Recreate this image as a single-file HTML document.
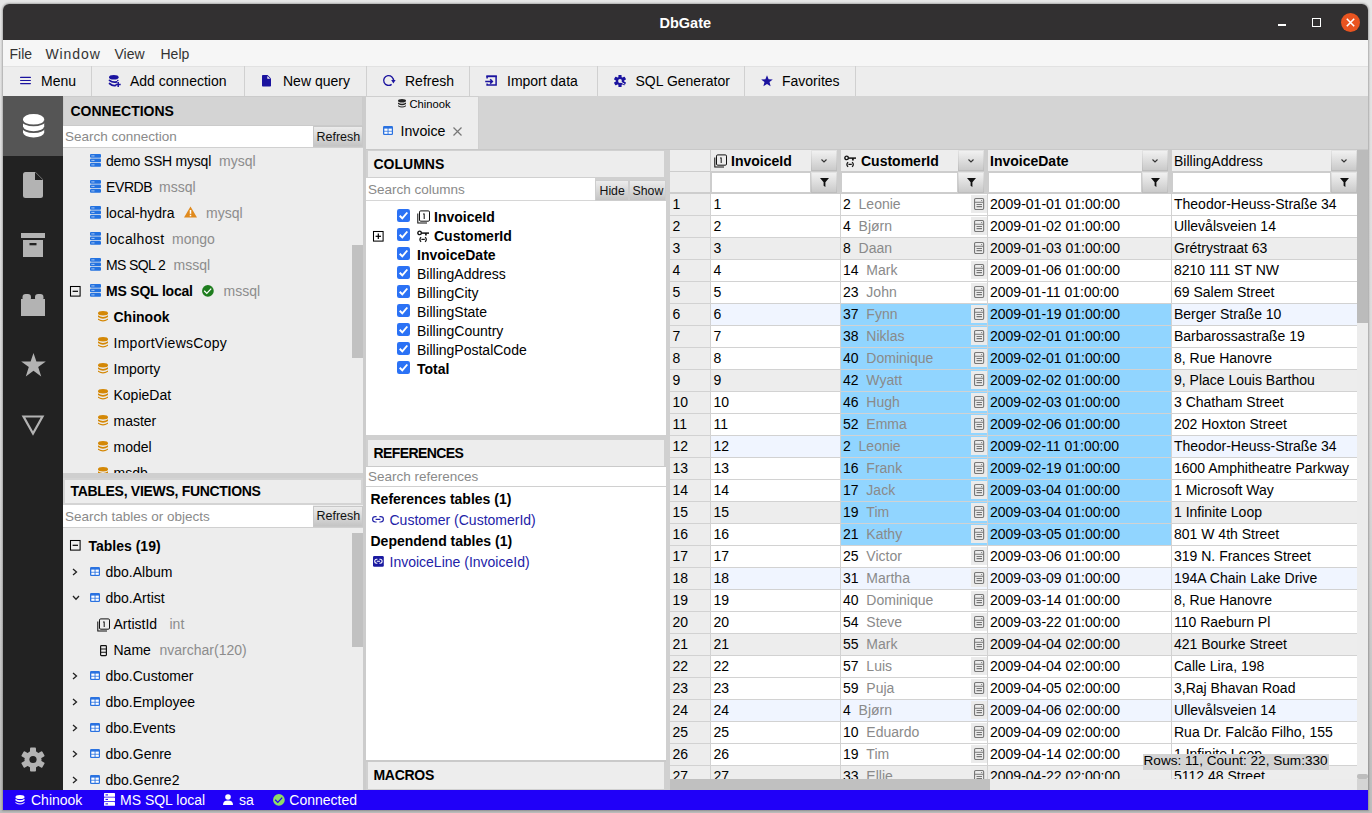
<!DOCTYPE html><html><head><meta charset="utf-8"><style>
*{box-sizing:border-box;margin:0;padding:0}
html,body{width:1372px;height:813px;overflow:hidden}
body{position:relative;font-family:"Liberation Sans",sans-serif;font-size:14px;color:#000;background:linear-gradient(to bottom,#e6e6e6 0%,#d8d8d8 60%,#bdbdbd 100%)}
.a{position:absolute}
svg.a{overflow:visible}
.t{position:absolute;white-space:nowrap;line-height:1}
</style></head><body><div class="a" style="left:3px;top:4px;width:1365px;height:806px;background:#ededed;border-radius:6px 6px 0 0;box-shadow:0 0 2px 1px rgba(0,0,0,.25)"></div>
<div class="a" style="left:3px;top:4px;width:1365px;height:36px;background:#323031;border-radius:6px 6px 0 0"></div>
<div class="t" style="left:659.5px;top:16.03px;font-size:14.5px;font-weight:bold;color:#fff">DbGate</div>
<div class="a" style="left:1278px;top:24px;width:8px;height:1.5px;background:#fff;"></div>
<div class="a" style="left:1312px;top:18px;width:9px;height:9px;border:1.2px solid #fff"></div>
<div class="a" style="left:1341px;top:13px;width:19px;height:19px;border-radius:50%;background:#e95420"></div>
<svg class="a" style="left:1341px;top:13px" width="19" height="19" viewBox="0 0 19 19"><path d="M5.8 5.8L13.2 13.2M13.2 5.8L5.8 13.2" stroke="#fff" stroke-width="1.6"/></svg>
<div class="a" style="left:3px;top:40px;width:1365px;height:26px;background:#f6f6f6;"></div>
<div class="t" style="left:9.5px;top:46.65px;font-size:14px;color:#333">File</div>
<div class="t" style="left:45.5px;top:46.65px;font-size:14px;color:#333;letter-spacing:0.9px">Window</div>
<div class="t" style="left:114.5px;top:46.65px;font-size:14px;color:#333">View</div>
<div class="t" style="left:160.5px;top:46.65px;font-size:14px;color:#333">Help</div>
<div class="a" style="left:3px;top:66px;width:1365px;height:30px;background:#ededed;"></div>
<div class="a" style="left:3px;top:66px;width:1365px;height:1px;background:#e2e2e2;"></div>
<div class="a" style="left:91px;top:66px;width:1px;height:30px;background:#d0d0d0;"></div>
<div class="a" style="left:244px;top:66px;width:1px;height:30px;background:#d0d0d0;"></div>
<div class="a" style="left:366px;top:66px;width:1px;height:30px;background:#d0d0d0;"></div>
<div class="a" style="left:469px;top:66px;width:1px;height:30px;background:#d0d0d0;"></div>
<div class="a" style="left:597px;top:66px;width:1px;height:30px;background:#d0d0d0;"></div>
<div class="a" style="left:744px;top:66px;width:1px;height:30px;background:#d0d0d0;"></div>
<div class="a" style="left:855px;top:66px;width:1px;height:30px;background:#d0d0d0;"></div>
<svg class="a" style="left:20px;top:76px" width="11" height="9" viewBox="0 0 11 9"><path d="M0.6 1.4H10.4M0.6 4.5H10.4M0.6 7.6H10.4" stroke="#1b139f" stroke-width="1.2" stroke-linecap="round"/></svg>
<div class="t" style="left:41px;top:74.15px;font-size:14px">Menu</div>
<svg class="a" style="left:109px;top:75px" width="13" height="13" viewBox="0 0 13 13"><ellipse cx="4.8" cy="2.3" rx="4.8" ry="2.3" fill="#1b139f"/><path d="M0.5 5.3Q3.6 7.9 7.6 6.9M0.5 8.5Q3.6 11.1 6.6 10.4" fill="none" stroke="#1b139f" stroke-width="1.7" stroke-linecap="round"/><circle cx="8.8" cy="5.5" r="0.8" fill="#1b139f"/><path d="M9.2 7V12M6.7 9.5H11.7" stroke="#1b139f" stroke-width="1.5"/></svg>
<div class="t" style="left:130px;top:74.15px;font-size:14px">Add connection</div>
<svg class="a" style="left:262px;top:75px" width="9" height="12" viewBox="0 0 9 12"><path d="M0.8 0H5.6L9 3.4V10.7Q9 11.5 8.2 11.5H0.8Q0 11.5 0 10.7V0.8Q0 0 0.8 0Z" fill="#1b139f"/><path d="M5.3 0.9V3.8H8.2Z" fill="#f4f4f4"/></svg>
<div class="t" style="left:283px;top:74.15px;font-size:14px">New query</div>
<svg class="a" style="left:382px;top:74px" width="14" height="13" viewBox="0 0 14 13"><path d="M9.62 10.36A4.9 4.9 0 1 1 11.48 6.93" fill="none" stroke="#1b139f" stroke-width="1.35"/><path d="M9.2 6.1H13.6L11.4 9.6Z" fill="#1b139f"/></svg>
<div class="t" style="left:405px;top:74.15px;font-size:14px">Refresh</div>
<svg class="a" style="left:485px;top:75px" width="13" height="12" viewBox="0 0 13 12"><path d="M2.1 3.4V1.3H11.1V9.9H2.1V8.4" fill="none" stroke="#1b139f" stroke-width="1.5"/><rect x="1.4" y="0.6" width="10.4" height="1.6" fill="#1b139f"/><path d="M0.2 6.4H7.2M5.2 4.2L7.4 6.4L5.2 8.6" fill="none" stroke="#1b139f" stroke-width="1.5"/></svg>
<div class="t" style="left:507px;top:74.15px;font-size:14px">Import data</div>
<svg class="a" style="left:614px;top:75px" width="12" height="12" viewBox="0 0 12 12"><g fill="#1b139f"><circle cx="6" cy="6" r="4"/><rect x="4.4" y="-0.1" width="3.2" height="3.2" rx=".6" transform="rotate(0 6 6)"/><rect x="4.4" y="-0.1" width="3.2" height="3.2" rx=".6" transform="rotate(60 6 6)"/><rect x="4.4" y="-0.1" width="3.2" height="3.2" rx=".6" transform="rotate(120 6 6)"/><rect x="4.4" y="-0.1" width="3.2" height="3.2" rx=".6" transform="rotate(180 6 6)"/><rect x="4.4" y="-0.1" width="3.2" height="3.2" rx=".6" transform="rotate(240 6 6)"/><rect x="4.4" y="-0.1" width="3.2" height="3.2" rx=".6" transform="rotate(300 6 6)"/></g><circle cx="6" cy="6" r="1.9" fill="#ededed"/><path d="M6.5 6.8L10.5 9.2" stroke="#ededed" stroke-width="1"/></svg>
<div class="t" style="left:635.5px;top:74.15px;font-size:14px">SQL Generator</div>
<svg class="a" style="left:761px;top:75px" width="12" height="12" viewBox="0 0 12 12"><path d="M6 0.3L7.6 4.3L11.8 4.5L8.5 7.1L9.6 11.3L6 8.9L2.4 11.3L3.5 7.1L0.2 4.5L4.4 4.3Z" fill="#1b139f"/></svg>
<div class="t" style="left:782px;top:74.15px;font-size:14px">Favorites</div>
<div class="a" style="left:3px;top:96px;width:60px;height:694px;background:#222;"></div>
<div class="a" style="left:3px;top:96px;width:60px;height:60px;background:#555;"></div>
<svg class="a" style="left:22.6px;top:113.9px" width="22" height="24" viewBox="0 0 22 24"><path d="M0 5.1A10.6 5.1 0 0 1 21.2 5.1V18.3A10.6 5.1 0 0 1 0 18.3Z" fill="#fff"/><path d="M-0.5 6.4A11.1 5 0 0 0 21.7 6.4M-0.5 13.1A11.1 5 0 0 0 21.7 13.1" fill="none" stroke="#555" stroke-width="1.7"/></svg>
<svg class="a" style="left:23px;top:172px" width="20" height="26" viewBox="0 0 20 26"><path d="M2.5 0H12.5L20 7.5V23.5Q20 26 17.5 26H2.5Q0 26 0 23.5V2.5Q0 0 2.5 0Z" fill="#b3b3b3"/><path d="M12 0V8H20" fill="#222"/></svg>
<svg class="a" style="left:21px;top:233px" width="24" height="24" viewBox="0 0 24 24"><rect x="0" y="0" width="24" height="5" fill="#b3b3b3"/><rect x="2" y="7" width="20" height="17" fill="#b3b3b3"/><rect x="8.5" y="10" width="7" height="2.3" fill="#222"/></svg>
<svg class="a" style="left:21px;top:294px" width="24" height="22" viewBox="0 0 24 22"><rect x="0" y="5" width="24" height="17" fill="#b3b3b3"/><rect x="1.5" y="0" width="8.5" height="7" rx="3.2" fill="#b3b3b3"/><rect x="14" y="0" width="8.5" height="7" rx="3.2" fill="#b3b3b3"/></svg>
<svg class="a" style="left:20.5px;top:353px" width="25" height="24" viewBox="0 0 25 24"><path d="M12.5 0L15.4 8.6H24.8L17.2 14L20.2 23.6L12.5 17.8L4.8 23.6L7.8 14L0.2 8.6H9.6Z" fill="#b3b3b3"/></svg>
<svg class="a" style="left:22px;top:415px" width="22" height="20" viewBox="0 0 22 20"><path d="M1.5 1.5H20.5L11 18.5Z" fill="none" stroke="#b3b3b3" stroke-width="2.2" stroke-linejoin="miter"/></svg>
<svg class="a" style="left:21px;top:747px" width="24" height="25" viewBox="0 0 24 24"><g fill="#b3b3b3"><circle cx="12" cy="12" r="8.5"/><rect x="9" y="0" width="6" height="6" rx="1" transform="rotate(0 12 12)"/><rect x="9" y="0" width="6" height="6" rx="1" transform="rotate(60 12 12)"/><rect x="9" y="0" width="6" height="6" rx="1" transform="rotate(120 12 12)"/><rect x="9" y="0" width="6" height="6" rx="1" transform="rotate(180 12 12)"/><rect x="9" y="0" width="6" height="6" rx="1" transform="rotate(240 12 12)"/><rect x="9" y="0" width="6" height="6" rx="1" transform="rotate(300 12 12)"/></g><circle cx="12" cy="12" r="3.6" fill="#222"/></svg>
<div class="a" style="left:63px;top:96px;width:300px;height:694px;background:#ededed;"></div>
<div class="a" style="left:63px;top:96px;width:300px;height:30px;background:#d4d4d4;border:1px solid #cbcbcb"></div>
<div class="t" style="left:70.5px;top:104.15px;font-size:14px;font-weight:bold">CONNECTIONS</div>
<div class="a" style="left:63px;top:126px;width:250px;height:21px;background:#fff;"></div>
<div class="t" style="left:65px;top:130.07px;font-size:13.5px;color:#8a8a8a">Search connection</div>
<div class="a" style="left:313px;top:126px;width:50px;height:21px;background:linear-gradient(#ececec,#c4c4c4);border:1px solid #c8c8c8"></div>
<div class="t" style="left:316.5px;top:130.92px;font-size:12.5px;color:#111">Refresh</div>
<div class="a" style="left:63px;top:147px;width:300px;height:1px;background:#d0d0d0;"></div>
<div class="a" style="left:352px;top:148px;width:11px;height:325px;background:#ededed;"></div>
<div class="a" style="left:352px;top:245px;width:11px;height:113px;background:#c1c1c1;"></div>
<svg class="a" style="left:90px;top:153.8px" width="11" height="13" viewBox="0 0 11 13"><rect x="0" y="0.0" width="11" height="3.8" rx="1" fill="#2372e0"/><rect x="1.5" y="1.4" width="1.2" height="1" fill="#fff" opacity=".8"/><rect x="3.2" y="1.4" width="1.2" height="1" fill="#fff" opacity=".8"/><rect x="0" y="4.5" width="11" height="3.8" rx="1" fill="#2372e0"/><rect x="1.5" y="5.9" width="1.2" height="1" fill="#fff" opacity=".8"/><rect x="3.2" y="5.9" width="1.2" height="1" fill="#fff" opacity=".8"/><rect x="0" y="9.0" width="11" height="3.8" rx="1" fill="#2372e0"/><rect x="1.5" y="10.4" width="1.2" height="1" fill="#fff" opacity=".8"/><rect x="3.2" y="10.4" width="1.2" height="1" fill="#fff" opacity=".8"/></svg>
<div class="t" style="left:106px;top:154.15px;font-size:14px;letter-spacing:-0.22px">demo SSH mysql</div>
<div class="t" style="left:219px;top:154.15px;font-size:14px;color:#8c8c8c">mysql</div>
<svg class="a" style="left:90px;top:179.8px" width="11" height="13" viewBox="0 0 11 13"><rect x="0" y="0.0" width="11" height="3.8" rx="1" fill="#2372e0"/><rect x="1.5" y="1.4" width="1.2" height="1" fill="#fff" opacity=".8"/><rect x="3.2" y="1.4" width="1.2" height="1" fill="#fff" opacity=".8"/><rect x="0" y="4.5" width="11" height="3.8" rx="1" fill="#2372e0"/><rect x="1.5" y="5.9" width="1.2" height="1" fill="#fff" opacity=".8"/><rect x="3.2" y="5.9" width="1.2" height="1" fill="#fff" opacity=".8"/><rect x="0" y="9.0" width="11" height="3.8" rx="1" fill="#2372e0"/><rect x="1.5" y="10.4" width="1.2" height="1" fill="#fff" opacity=".8"/><rect x="3.2" y="10.4" width="1.2" height="1" fill="#fff" opacity=".8"/></svg>
<div class="t" style="left:106px;top:180.15px;font-size:14px;letter-spacing:-0.4px">EVRDB</div>
<div class="t" style="left:159px;top:180.15px;font-size:14px;color:#8c8c8c">mssql</div>
<svg class="a" style="left:90px;top:205.8px" width="11" height="13" viewBox="0 0 11 13"><rect x="0" y="0.0" width="11" height="3.8" rx="1" fill="#2372e0"/><rect x="1.5" y="1.4" width="1.2" height="1" fill="#fff" opacity=".8"/><rect x="3.2" y="1.4" width="1.2" height="1" fill="#fff" opacity=".8"/><rect x="0" y="4.5" width="11" height="3.8" rx="1" fill="#2372e0"/><rect x="1.5" y="5.9" width="1.2" height="1" fill="#fff" opacity=".8"/><rect x="3.2" y="5.9" width="1.2" height="1" fill="#fff" opacity=".8"/><rect x="0" y="9.0" width="11" height="3.8" rx="1" fill="#2372e0"/><rect x="1.5" y="10.4" width="1.2" height="1" fill="#fff" opacity=".8"/><rect x="3.2" y="10.4" width="1.2" height="1" fill="#fff" opacity=".8"/></svg>
<div class="t" style="left:106px;top:206.15px;font-size:14px">local-hydra</div>
<svg class="a" style="left:183.5px;top:205.8px" width="13" height="12" viewBox="0 0 13 12"><path d="M6.5 0.5L13 11.5H0Z" fill="#e08a1e"/><path d="M6.5 4V7.8" stroke="#fff" stroke-width="1.5"/><rect x="5.75" y="8.8" width="1.5" height="1.5" fill="#fff"/></svg>
<div class="t" style="left:206px;top:206.15px;font-size:14px;color:#8c8c8c">mysql</div>
<svg class="a" style="left:90px;top:231.8px" width="11" height="13" viewBox="0 0 11 13"><rect x="0" y="0.0" width="11" height="3.8" rx="1" fill="#2372e0"/><rect x="1.5" y="1.4" width="1.2" height="1" fill="#fff" opacity=".8"/><rect x="3.2" y="1.4" width="1.2" height="1" fill="#fff" opacity=".8"/><rect x="0" y="4.5" width="11" height="3.8" rx="1" fill="#2372e0"/><rect x="1.5" y="5.9" width="1.2" height="1" fill="#fff" opacity=".8"/><rect x="3.2" y="5.9" width="1.2" height="1" fill="#fff" opacity=".8"/><rect x="0" y="9.0" width="11" height="3.8" rx="1" fill="#2372e0"/><rect x="1.5" y="10.4" width="1.2" height="1" fill="#fff" opacity=".8"/><rect x="3.2" y="10.4" width="1.2" height="1" fill="#fff" opacity=".8"/></svg>
<div class="t" style="left:106px;top:232.15px;font-size:14px;letter-spacing:0.35px">localhost</div>
<div class="t" style="left:172px;top:232.15px;font-size:14px;color:#8c8c8c">mongo</div>
<svg class="a" style="left:90px;top:257.8px" width="11" height="13" viewBox="0 0 11 13"><rect x="0" y="0.0" width="11" height="3.8" rx="1" fill="#2372e0"/><rect x="1.5" y="1.4" width="1.2" height="1" fill="#fff" opacity=".8"/><rect x="3.2" y="1.4" width="1.2" height="1" fill="#fff" opacity=".8"/><rect x="0" y="4.5" width="11" height="3.8" rx="1" fill="#2372e0"/><rect x="1.5" y="5.9" width="1.2" height="1" fill="#fff" opacity=".8"/><rect x="3.2" y="5.9" width="1.2" height="1" fill="#fff" opacity=".8"/><rect x="0" y="9.0" width="11" height="3.8" rx="1" fill="#2372e0"/><rect x="1.5" y="10.4" width="1.2" height="1" fill="#fff" opacity=".8"/><rect x="3.2" y="10.4" width="1.2" height="1" fill="#fff" opacity=".8"/></svg>
<div class="t" style="left:106px;top:258.15px;font-size:14px;letter-spacing:-0.6px">MS SQL 2</div>
<div class="t" style="left:173.5px;top:258.15px;font-size:14px;color:#8c8c8c">mssql</div>
<svg class="a" style="left:90px;top:283.8px" width="11" height="13" viewBox="0 0 11 13"><rect x="0" y="0.0" width="11" height="3.8" rx="1" fill="#2372e0"/><rect x="1.5" y="1.4" width="1.2" height="1" fill="#fff" opacity=".8"/><rect x="3.2" y="1.4" width="1.2" height="1" fill="#fff" opacity=".8"/><rect x="0" y="4.5" width="11" height="3.8" rx="1" fill="#2372e0"/><rect x="1.5" y="5.9" width="1.2" height="1" fill="#fff" opacity=".8"/><rect x="3.2" y="5.9" width="1.2" height="1" fill="#fff" opacity=".8"/><rect x="0" y="9.0" width="11" height="3.8" rx="1" fill="#2372e0"/><rect x="1.5" y="10.4" width="1.2" height="1" fill="#fff" opacity=".8"/><rect x="3.2" y="10.4" width="1.2" height="1" fill="#fff" opacity=".8"/></svg>
<div class="t" style="left:106px;top:284.15px;font-size:14px;font-weight:bold;letter-spacing:-0.2px">MS SQL local</div>
<svg class="a" style="left:201.7px;top:284.7px" width="12" height="12" viewBox="0 0 12 12"><circle cx="5.9" cy="5.9" r="5.85" fill="#1e7d1e"/><path d="M2.2 5.7L4.8 8.4L9.2 3.6" fill="none" stroke="#fff" stroke-width="1.3"/></svg>
<div class="t" style="left:223.5px;top:284.15px;font-size:14px;color:#8c8c8c">mssql</div>
<svg class="a" style="left:69.5px;top:285.5px" width="11" height="11" viewBox="0 0 11 11"><rect x="0.5" y="0.5" width="9.6" height="9.6" fill="none" stroke="#000" stroke-width="1.05"/><path d="M2.6 5.3H8" stroke="#000" stroke-width="1.2"/></svg>
<svg class="a" style="left:98px;top:310.8px" width="10" height="11" viewBox="0 0 10 11"><ellipse cx="5" cy="2.2" rx="5" ry="2.2" fill="#d48806"/><path d="M0 4.2 Q5 7.6 10 4.2 V6 Q5 9.4 0 6Z" fill="#d48806"/><path d="M0 7.6 Q5 11 10 7.6 V8.8 Q5 12.2 0 8.8Z" fill="#d48806"/></svg>
<div class="t" style="left:113.5px;top:310.15px;font-size:14px;font-weight:bold">Chinook</div>
<svg class="a" style="left:98px;top:336.8px" width="10" height="11" viewBox="0 0 10 11"><ellipse cx="5" cy="2.2" rx="5" ry="2.2" fill="#d48806"/><path d="M0 4.2 Q5 7.6 10 4.2 V6 Q5 9.4 0 6Z" fill="#d48806"/><path d="M0 7.6 Q5 11 10 7.6 V8.8 Q5 12.2 0 8.8Z" fill="#d48806"/></svg>
<div class="t" style="left:113.5px;top:336.15px;font-size:14px;letter-spacing:0.28px">ImportViewsCopy</div>
<svg class="a" style="left:98px;top:362.8px" width="10" height="11" viewBox="0 0 10 11"><ellipse cx="5" cy="2.2" rx="5" ry="2.2" fill="#d48806"/><path d="M0 4.2 Q5 7.6 10 4.2 V6 Q5 9.4 0 6Z" fill="#d48806"/><path d="M0 7.6 Q5 11 10 7.6 V8.8 Q5 12.2 0 8.8Z" fill="#d48806"/></svg>
<div class="t" style="left:113.5px;top:362.15px;font-size:14px">Importy</div>
<svg class="a" style="left:98px;top:388.8px" width="10" height="11" viewBox="0 0 10 11"><ellipse cx="5" cy="2.2" rx="5" ry="2.2" fill="#d48806"/><path d="M0 4.2 Q5 7.6 10 4.2 V6 Q5 9.4 0 6Z" fill="#d48806"/><path d="M0 7.6 Q5 11 10 7.6 V8.8 Q5 12.2 0 8.8Z" fill="#d48806"/></svg>
<div class="t" style="left:113.5px;top:388.15px;font-size:14px">KopieDat</div>
<svg class="a" style="left:98px;top:414.8px" width="10" height="11" viewBox="0 0 10 11"><ellipse cx="5" cy="2.2" rx="5" ry="2.2" fill="#d48806"/><path d="M0 4.2 Q5 7.6 10 4.2 V6 Q5 9.4 0 6Z" fill="#d48806"/><path d="M0 7.6 Q5 11 10 7.6 V8.8 Q5 12.2 0 8.8Z" fill="#d48806"/></svg>
<div class="t" style="left:113.5px;top:414.15px;font-size:14px">master</div>
<svg class="a" style="left:98px;top:440.8px" width="10" height="11" viewBox="0 0 10 11"><ellipse cx="5" cy="2.2" rx="5" ry="2.2" fill="#d48806"/><path d="M0 4.2 Q5 7.6 10 4.2 V6 Q5 9.4 0 6Z" fill="#d48806"/><path d="M0 7.6 Q5 11 10 7.6 V8.8 Q5 12.2 0 8.8Z" fill="#d48806"/></svg>
<div class="t" style="left:113.5px;top:440.15px;font-size:14px">model</div>
<svg class="a" style="left:98px;top:466.8px" width="10" height="11" viewBox="0 0 10 11"><ellipse cx="5" cy="2.2" rx="5" ry="2.2" fill="#d48806"/><path d="M0 4.2 Q5 7.6 10 4.2 V6 Q5 9.4 0 6Z" fill="#d48806"/><path d="M0 7.6 Q5 11 10 7.6 V8.8 Q5 12.2 0 8.8Z" fill="#d48806"/></svg>
<div class="t" style="left:113.5px;top:466.15px;font-size:14px">msdb</div>
<div class="a" style="left:63px;top:473px;width:300px;height:5px;background:#cfcfcf;"></div>
<div class="a" style="left:63px;top:478px;width:300px;height:27px;background:#ededed;border:2px solid #d4d4d4"></div>
<div class="t" style="left:70.5px;top:484.15px;font-size:14px;font-weight:bold;letter-spacing:-0.3px">TABLES, VIEWS, FUNCTIONS</div>
<div class="a" style="left:63px;top:505px;width:250px;height:22px;background:#fff;"></div>
<div class="t" style="left:65px;top:509.57px;font-size:13.5px;color:#8a8a8a">Search tables or objects</div>
<div class="a" style="left:313px;top:506px;width:50px;height:21px;background:linear-gradient(#ececec,#c4c4c4);border:1px solid #c8c8c8"></div>
<div class="t" style="left:316.5px;top:510.42px;font-size:12.5px;color:#111">Refresh</div>
<div class="a" style="left:63px;top:527px;width:300px;height:1px;background:#d0d0d0;"></div>
<div class="a" style="left:352px;top:533px;width:11px;height:114px;background:#c1c1c1;"></div>
<svg class="a" style="left:69.5px;top:540px" width="11" height="11" viewBox="0 0 11 11"><rect x="0.5" y="0.5" width="9.6" height="9.6" fill="none" stroke="#000" stroke-width="1.05"/><path d="M2.6 5.3H8" stroke="#000" stroke-width="1.2"/></svg>
<div class="t" style="left:88.5px;top:538.65px;font-size:14px;font-weight:bold">Tables (19)</div>
<svg class="a" style="left:72px;top:567.5px" width="6" height="8" viewBox="0 0 6 8"><path d="M1 1L4.5 4L1 7" fill="none" stroke="#222" stroke-width="1.3"/></svg>
<svg class="a" style="left:90px;top:567.0px" width="10" height="9" viewBox="0 0 10 9"><rect x="0" y="0" width="10" height="9" rx="1.2" fill="#2a72e0"/><rect x="1.3" y="2.6" width="3.3" height="2.2" fill="#fff"/><rect x="5.5" y="2.6" width="3.3" height="2.2" fill="#fff"/><rect x="1.3" y="5.6" width="3.3" height="2.2" fill="#fff"/><rect x="5.5" y="5.6" width="3.3" height="2.2" fill="#fff"/></svg>
<div class="t" style="left:105.5px;top:564.65px;font-size:14px">dbo.Album</div>
<svg class="a" style="left:71.5px;top:594.5px" width="8" height="6" viewBox="0 0 8 6"><path d="M1 1L4 4.2L7 1" fill="none" stroke="#222" stroke-width="1.3"/></svg>
<svg class="a" style="left:90px;top:593.0px" width="10" height="9" viewBox="0 0 10 9"><rect x="0" y="0" width="10" height="9" rx="1.2" fill="#2a72e0"/><rect x="1.3" y="2.6" width="3.3" height="2.2" fill="#fff"/><rect x="5.5" y="2.6" width="3.3" height="2.2" fill="#fff"/><rect x="1.3" y="5.6" width="3.3" height="2.2" fill="#fff"/><rect x="5.5" y="5.6" width="3.3" height="2.2" fill="#fff"/></svg>
<div class="t" style="left:105.5px;top:590.65px;font-size:14px">dbo.Artist</div>
<svg class="a" style="left:72px;top:671.5px" width="6" height="8" viewBox="0 0 6 8"><path d="M1 1L4.5 4L1 7" fill="none" stroke="#222" stroke-width="1.3"/></svg>
<svg class="a" style="left:90px;top:671.0px" width="10" height="9" viewBox="0 0 10 9"><rect x="0" y="0" width="10" height="9" rx="1.2" fill="#2a72e0"/><rect x="1.3" y="2.6" width="3.3" height="2.2" fill="#fff"/><rect x="5.5" y="2.6" width="3.3" height="2.2" fill="#fff"/><rect x="1.3" y="5.6" width="3.3" height="2.2" fill="#fff"/><rect x="5.5" y="5.6" width="3.3" height="2.2" fill="#fff"/></svg>
<div class="t" style="left:105.5px;top:668.65px;font-size:14px">dbo.Customer</div>
<svg class="a" style="left:72px;top:697.5px" width="6" height="8" viewBox="0 0 6 8"><path d="M1 1L4.5 4L1 7" fill="none" stroke="#222" stroke-width="1.3"/></svg>
<svg class="a" style="left:90px;top:697.0px" width="10" height="9" viewBox="0 0 10 9"><rect x="0" y="0" width="10" height="9" rx="1.2" fill="#2a72e0"/><rect x="1.3" y="2.6" width="3.3" height="2.2" fill="#fff"/><rect x="5.5" y="2.6" width="3.3" height="2.2" fill="#fff"/><rect x="1.3" y="5.6" width="3.3" height="2.2" fill="#fff"/><rect x="5.5" y="5.6" width="3.3" height="2.2" fill="#fff"/></svg>
<div class="t" style="left:105.5px;top:694.65px;font-size:14px">dbo.Employee</div>
<svg class="a" style="left:72px;top:723.5px" width="6" height="8" viewBox="0 0 6 8"><path d="M1 1L4.5 4L1 7" fill="none" stroke="#222" stroke-width="1.3"/></svg>
<svg class="a" style="left:90px;top:723.0px" width="10" height="9" viewBox="0 0 10 9"><rect x="0" y="0" width="10" height="9" rx="1.2" fill="#2a72e0"/><rect x="1.3" y="2.6" width="3.3" height="2.2" fill="#fff"/><rect x="5.5" y="2.6" width="3.3" height="2.2" fill="#fff"/><rect x="1.3" y="5.6" width="3.3" height="2.2" fill="#fff"/><rect x="5.5" y="5.6" width="3.3" height="2.2" fill="#fff"/></svg>
<div class="t" style="left:105.5px;top:720.65px;font-size:14px">dbo.Events</div>
<svg class="a" style="left:72px;top:749.5px" width="6" height="8" viewBox="0 0 6 8"><path d="M1 1L4.5 4L1 7" fill="none" stroke="#222" stroke-width="1.3"/></svg>
<svg class="a" style="left:90px;top:749.0px" width="10" height="9" viewBox="0 0 10 9"><rect x="0" y="0" width="10" height="9" rx="1.2" fill="#2a72e0"/><rect x="1.3" y="2.6" width="3.3" height="2.2" fill="#fff"/><rect x="5.5" y="2.6" width="3.3" height="2.2" fill="#fff"/><rect x="1.3" y="5.6" width="3.3" height="2.2" fill="#fff"/><rect x="5.5" y="5.6" width="3.3" height="2.2" fill="#fff"/></svg>
<div class="t" style="left:105.5px;top:746.65px;font-size:14px">dbo.Genre</div>
<svg class="a" style="left:72px;top:775.5px" width="6" height="8" viewBox="0 0 6 8"><path d="M1 1L4.5 4L1 7" fill="none" stroke="#222" stroke-width="1.3"/></svg>
<svg class="a" style="left:90px;top:775.0px" width="10" height="9" viewBox="0 0 10 9"><rect x="0" y="0" width="10" height="9" rx="1.2" fill="#2a72e0"/><rect x="1.3" y="2.6" width="3.3" height="2.2" fill="#fff"/><rect x="5.5" y="2.6" width="3.3" height="2.2" fill="#fff"/><rect x="1.3" y="5.6" width="3.3" height="2.2" fill="#fff"/><rect x="5.5" y="5.6" width="3.3" height="2.2" fill="#fff"/></svg>
<div class="t" style="left:105.5px;top:772.65px;font-size:14px">dbo.Genre2</div>
<svg class="a" style="left:96.5px;top:617.5px" width="14" height="14" viewBox="0 0 14 14"><rect x="2.5" y="0.9" width="10" height="10.3" rx="1.2" fill="none" stroke="#111" stroke-width="1"/><path d="M0.8 3.4V12.9H10" fill="none" stroke="#111" stroke-width="1.05"/><path d="M6.1 4.2L7.2 3.7V9" fill="none" stroke="#111" stroke-width="1"/></svg>
<div class="t" style="left:113.5px;top:617.15px;font-size:14px">ArtistId</div>
<div class="t" style="left:169.5px;top:617.15px;font-size:14px;color:#8c8c8c">int</div>
<svg class="a" style="left:99.5px;top:644.5px" width="7" height="11" viewBox="0 0 7 11"><rect x="0.6" y="0.6" width="5.8" height="10" rx="0.8" fill="none" stroke="#111" stroke-width="1.2"/><path d="M0.6 4H6.4M0.6 7.3H6.4" stroke="#111" stroke-width="1.1"/></svg>
<div class="t" style="left:113.5px;top:643.15px;font-size:14px">Name</div>
<div class="t" style="left:159.5px;top:643.15px;font-size:14px;color:#8c8c8c">nvarchar(120)</div>
<div class="a" style="left:363px;top:96px;width:3px;height:694px;background:#cccccc;"></div>
<div class="a" style="left:366px;top:96px;width:1002px;height:54px;background:#d4d4d4;"></div>
<div class="a" style="left:366px;top:96px;width:113px;height:16px;background:#ededed;border-top:1px solid #cfcfcf;border-bottom:1px solid #cfcfcf;border-right:1px solid #d0d0d0"></div>
<svg class="a" style="left:397.5px;top:98.5px" width="8" height="9" viewBox="0 0 10 11"><ellipse cx="5" cy="2.2" rx="5" ry="2.2" fill="#222"/><path d="M0 4.2 Q5 7.6 10 4.2 V6 Q5 9.4 0 6Z" fill="#222"/><path d="M0 7.6 Q5 11 10 7.6 V8.8 Q5 12.2 0 8.8Z" fill="#222"/></svg>
<div class="t" style="left:409.5px;top:98.72px;font-size:11.2px">Chinook</div>
<div class="a" style="left:366px;top:111px;width:113px;height:38px;background:#ededed;border-right:1px solid #d0d0d0"></div>
<svg class="a" style="left:383px;top:126px" width="10" height="9" viewBox="0 0 10 9"><rect x="0" y="0" width="10" height="9" rx="1.2" fill="#2a72e0"/><rect x="1.3" y="2.6" width="3.3" height="2.2" fill="#fff"/><rect x="5.5" y="2.6" width="3.3" height="2.2" fill="#fff"/><rect x="1.3" y="5.6" width="3.3" height="2.2" fill="#fff"/><rect x="5.5" y="5.6" width="3.3" height="2.2" fill="#fff"/></svg>
<div class="t" style="left:400.5px;top:123.98px;font-size:14.2px">Invoice</div>
<svg class="a" style="left:452.5px;top:126.5px" width="9" height="9" viewBox="0 0 9 9"><path d="M0.5 0.5L8.5 8.5M8.5 0.5L0.5 8.5" stroke="#777" stroke-width="1.2"/></svg>
<div class="a" style="left:366px;top:149px;width:1002px;height:1px;background:#c8c8c8;"></div>
<div class="a" style="left:366px;top:150px;width:300px;height:640px;background:#d0d0d0;"></div>
<div class="a" style="left:368px;top:151px;width:296px;height:26px;background:#ededed;"></div>
<div class="t" style="left:373.5px;top:157.15px;font-size:14px;font-weight:bold">COLUMNS</div>
<div class="a" style="left:366px;top:178px;width:229px;height:22px;background:#fff;"></div>
<div class="t" style="left:368px;top:182.57px;font-size:13.5px;color:#8a8a8a">Search columns</div>
<div class="a" style="left:595px;top:179.5px;width:33.5px;height:21px;background:linear-gradient(#ececec,#c4c4c4);border:1px solid #cdcdcd"></div>
<div class="t" style="left:599.5px;top:184.59px;font-size:12.3px;color:#111">Hide</div>
<div class="a" style="left:629px;top:179.5px;width:36.5px;height:21px;background:linear-gradient(#ececec,#c4c4c4);border:1px solid #cdcdcd"></div>
<div class="t" style="left:632.5px;top:184.59px;font-size:12.3px;color:#111">Show</div>
<div class="a" style="left:366px;top:200px;width:229px;height:1px;background:#d6d6d6;"></div>
<div class="a" style="left:366px;top:201px;width:300px;height:234px;background:#fff;"></div>
<svg class="a" style="left:397px;top:209px" width="13" height="13" viewBox="0 0 13 13"><rect x="0" y="0" width="13" height="13" rx="2.2" fill="#2b72f5"/><path d="M2.7 6.8L5.3 9.3L10.3 3.5" fill="none" stroke="#fff" stroke-width="1.9"/></svg>
<svg class="a" style="left:416.9px;top:209.5px" width="14" height="14" viewBox="0 0 14 14"><rect x="2.5" y="0.9" width="10" height="10.3" rx="1.2" fill="none" stroke="#111" stroke-width="1"/><path d="M0.8 3.4V12.9H10" fill="none" stroke="#111" stroke-width="1.05"/><path d="M6.1 4.2L7.2 3.7V9" fill="none" stroke="#111" stroke-width="1"/></svg>
<div class="t" style="left:434px;top:209.85px;font-size:14px;font-weight:bold">InvoiceId</div>
<svg class="a" style="left:397px;top:228px" width="13" height="13" viewBox="0 0 13 13"><rect x="0" y="0" width="13" height="13" rx="2.2" fill="#2b72f5"/><path d="M2.7 6.8L5.3 9.3L10.3 3.5" fill="none" stroke="#fff" stroke-width="1.9"/></svg>
<svg class="a" style="left:417.3px;top:230.3px" width="12" height="12" viewBox="0 0 12 12"><circle cx="2.6" cy="2.9" r="1.75" fill="none" stroke="#111" stroke-width="1.4"/><path d="M4.2 3.1H12" fill="none" stroke="#111" stroke-width="1.5"/><path d="M8.9 3.1V5.6" fill="none" stroke="#111" stroke-width="1.7"/><path d="M4.1 7.1Q1.7 9.4 4.1 11.7M8.1 7.1Q10.5 9.4 8.1 11.7M4.4 9.4H7.8" fill="none" stroke="#111" stroke-width="1.25"/></svg>
<svg class="a" style="left:372.8px;top:230.8px" width="11" height="11" viewBox="0 0 11 11"><rect x="0.5" y="0.5" width="9.6" height="9.6" fill="none" stroke="#000" stroke-width="1.05"/><path d="M2.6 5.3H8" stroke="#000" stroke-width="1.2"/><path d="M5.3 2.6V8" stroke="#000" stroke-width="1.2"/></svg>
<div class="t" style="left:434px;top:228.85px;font-size:14px;font-weight:bold">CustomerId</div>
<svg class="a" style="left:397px;top:247px" width="13" height="13" viewBox="0 0 13 13"><rect x="0" y="0" width="13" height="13" rx="2.2" fill="#2b72f5"/><path d="M2.7 6.8L5.3 9.3L10.3 3.5" fill="none" stroke="#fff" stroke-width="1.9"/></svg>
<div class="t" style="left:417px;top:247.85px;font-size:14px;font-weight:bold">InvoiceDate</div>
<svg class="a" style="left:397px;top:266px" width="13" height="13" viewBox="0 0 13 13"><rect x="0" y="0" width="13" height="13" rx="2.2" fill="#2b72f5"/><path d="M2.7 6.8L5.3 9.3L10.3 3.5" fill="none" stroke="#fff" stroke-width="1.9"/></svg>
<div class="t" style="left:417px;top:266.85px;font-size:14px">BillingAddress</div>
<svg class="a" style="left:397px;top:285px" width="13" height="13" viewBox="0 0 13 13"><rect x="0" y="0" width="13" height="13" rx="2.2" fill="#2b72f5"/><path d="M2.7 6.8L5.3 9.3L10.3 3.5" fill="none" stroke="#fff" stroke-width="1.9"/></svg>
<div class="t" style="left:417px;top:285.85px;font-size:14px">BillingCity</div>
<svg class="a" style="left:397px;top:304px" width="13" height="13" viewBox="0 0 13 13"><rect x="0" y="0" width="13" height="13" rx="2.2" fill="#2b72f5"/><path d="M2.7 6.8L5.3 9.3L10.3 3.5" fill="none" stroke="#fff" stroke-width="1.9"/></svg>
<div class="t" style="left:417px;top:304.85px;font-size:14px">BillingState</div>
<svg class="a" style="left:397px;top:323px" width="13" height="13" viewBox="0 0 13 13"><rect x="0" y="0" width="13" height="13" rx="2.2" fill="#2b72f5"/><path d="M2.7 6.8L5.3 9.3L10.3 3.5" fill="none" stroke="#fff" stroke-width="1.9"/></svg>
<div class="t" style="left:417px;top:323.85px;font-size:14px">BillingCountry</div>
<svg class="a" style="left:397px;top:342px" width="13" height="13" viewBox="0 0 13 13"><rect x="0" y="0" width="13" height="13" rx="2.2" fill="#2b72f5"/><path d="M2.7 6.8L5.3 9.3L10.3 3.5" fill="none" stroke="#fff" stroke-width="1.9"/></svg>
<div class="t" style="left:417px;top:342.85px;font-size:14px">BillingPostalCode</div>
<svg class="a" style="left:397px;top:361px" width="13" height="13" viewBox="0 0 13 13"><rect x="0" y="0" width="13" height="13" rx="2.2" fill="#2b72f5"/><path d="M2.7 6.8L5.3 9.3L10.3 3.5" fill="none" stroke="#fff" stroke-width="1.9"/></svg>
<div class="t" style="left:417px;top:361.85px;font-size:14px;font-weight:bold">Total</div>
<div class="a" style="left:368px;top:440px;width:296px;height:26px;background:#ededed;"></div>
<div class="t" style="left:373.5px;top:446.15px;font-size:14px;font-weight:bold;letter-spacing:-0.6px">REFERENCES</div>
<div class="a" style="left:366px;top:466px;width:300px;height:1px;background:#cacaca;"></div>
<div class="a" style="left:366px;top:467px;width:300px;height:19px;background:#fff;"></div>
<div class="t" style="left:368px;top:469.57px;font-size:13.5px;color:#8a8a8a">Search references</div>
<div class="a" style="left:366px;top:486px;width:300px;height:275px;background:#fff;"></div>
<div class="a" style="left:366px;top:485.5px;width:300px;height:1px;background:#d0d0d0;"></div>
<div class="t" style="left:370.5px;top:491.95px;font-size:14px;font-weight:bold">References tables (1)</div>
<svg class="a" style="left:372px;top:516px" width="12" height="7" viewBox="0 0 12 7"><path d="M4.6 0.6H3.3A2.7 2.7 0 0 0 3.3 6H4.6M7.4 0.6H8.7A2.7 2.7 0 0 1 8.7 6H7.4M3.6 3.3H8.4" fill="none" stroke="#2222a8" stroke-width="1.15"/></svg>
<div class="t" style="left:389.5px;top:513.15px;font-size:14px;color:#2222a8">Customer (CustomerId)</div>
<div class="t" style="left:370.5px;top:533.65px;font-size:14px;font-weight:bold">Dependend tables (1)</div>
<svg class="a" style="left:373px;top:556px" width="11" height="11" viewBox="0 0 11 11"><rect x="0" y="0" width="10.8" height="10.8" rx="1.3" fill="#1a1aa0"/><path d="M4.4 3.3H3.7A2 2 0 0 0 3.7 7.3H4.4M6.4 3.3H7.1A2 2 0 0 1 7.1 7.3H6.4M3.8 5.3H7" fill="none" stroke="#fff" stroke-width="1.05"/></svg>
<div class="t" style="left:389.5px;top:555.15px;font-size:14px;color:#2222a8">InvoiceLine (InvoiceId)</div>
<div class="a" style="left:366px;top:760px;width:300px;height:2px;background:#cacaca;"></div>
<div class="a" style="left:368px;top:762px;width:296px;height:27px;background:#ededed;"></div>
<div class="t" style="left:373.5px;top:768.15px;font-size:14px;font-weight:bold;letter-spacing:-0.3px">MACROS</div>
<div class="a" style="left:666px;top:150px;width:4px;height:640px;background:#d0d0d0;"></div>
<div class="a" style="left:670px;top:150px;width:698px;height:640px;background:#ececec;"></div>
<div class="a" style="left:670px;top:150px;width:687px;height:44px;background:#cdcdcd;"></div>
<div class="a" style="left:670px;top:150px;width:40px;height:21px;background:#ededed;"></div>
<div class="a" style="left:670px;top:172px;width:40px;height:20px;background:#ededed;"></div>
<div class="a" style="left:711px;top:150px;width:125px;height:21px;background:#ededed;"></div>
<div class="a" style="left:712px;top:173px;width:98px;height:19px;background:#fff;"></div>
<div class="a" style="left:811px;top:150px;width:25.5px;height:21px;background:linear-gradient(#f3f3f3,#c8c8c8);box-shadow:inset 0 0 0 1px rgba(0,0,0,.06)"></div>
<svg class="a" style="left:821px;top:159px" width="6" height="4" viewBox="0 0 6 4"><path d="M0.5 0.5L3 3L5.5 0.5" fill="none" stroke="#333" stroke-width="1.1"/></svg>
<div class="a" style="left:811px;top:172px;width:25.5px;height:21px;background:linear-gradient(#f3f3f3,#c8c8c8);box-shadow:inset 0 0 0 1px rgba(0,0,0,.06)"></div>
<svg class="a" style="left:819.5px;top:178px" width="9" height="9" viewBox="0 0 9 9"><path d="M0 0H9L5.4 4.2V9L3.6 7.8V4.2Z" fill="#111"/></svg>
<div class="a" style="left:841px;top:150px;width:142px;height:21px;background:#ededed;"></div>
<div class="a" style="left:842px;top:173px;width:115px;height:19px;background:#fff;"></div>
<div class="a" style="left:958px;top:150px;width:25.5px;height:21px;background:linear-gradient(#f3f3f3,#c8c8c8);box-shadow:inset 0 0 0 1px rgba(0,0,0,.06)"></div>
<svg class="a" style="left:968px;top:159px" width="6" height="4" viewBox="0 0 6 4"><path d="M0.5 0.5L3 3L5.5 0.5" fill="none" stroke="#333" stroke-width="1.1"/></svg>
<div class="a" style="left:958px;top:172px;width:25.5px;height:21px;background:linear-gradient(#f3f3f3,#c8c8c8);box-shadow:inset 0 0 0 1px rgba(0,0,0,.06)"></div>
<svg class="a" style="left:966.5px;top:178px" width="9" height="9" viewBox="0 0 9 9"><path d="M0 0H9L5.4 4.2V9L3.6 7.8V4.2Z" fill="#111"/></svg>
<div class="a" style="left:988px;top:150px;width:179px;height:21px;background:#ededed;"></div>
<div class="a" style="left:989px;top:173px;width:152px;height:19px;background:#fff;"></div>
<div class="a" style="left:1142px;top:150px;width:25.5px;height:21px;background:linear-gradient(#f3f3f3,#c8c8c8);box-shadow:inset 0 0 0 1px rgba(0,0,0,.06)"></div>
<svg class="a" style="left:1152px;top:159px" width="6" height="4" viewBox="0 0 6 4"><path d="M0.5 0.5L3 3L5.5 0.5" fill="none" stroke="#333" stroke-width="1.1"/></svg>
<div class="a" style="left:1142px;top:172px;width:25.5px;height:21px;background:linear-gradient(#f3f3f3,#c8c8c8);box-shadow:inset 0 0 0 1px rgba(0,0,0,.06)"></div>
<svg class="a" style="left:1150.5px;top:178px" width="9" height="9" viewBox="0 0 9 9"><path d="M0 0H9L5.4 4.2V9L3.6 7.8V4.2Z" fill="#111"/></svg>
<div class="a" style="left:1172px;top:150px;width:184px;height:21px;background:#ededed;"></div>
<div class="a" style="left:1173px;top:173px;width:157px;height:19px;background:#fff;"></div>
<div class="a" style="left:1331px;top:150px;width:25.5px;height:21px;background:linear-gradient(#f3f3f3,#c8c8c8);box-shadow:inset 0 0 0 1px rgba(0,0,0,.06)"></div>
<svg class="a" style="left:1341px;top:159px" width="6" height="4" viewBox="0 0 6 4"><path d="M0.5 0.5L3 3L5.5 0.5" fill="none" stroke="#333" stroke-width="1.1"/></svg>
<div class="a" style="left:1331px;top:172px;width:25.5px;height:21px;background:linear-gradient(#f3f3f3,#c8c8c8);box-shadow:inset 0 0 0 1px rgba(0,0,0,.06)"></div>
<svg class="a" style="left:1339.5px;top:178px" width="9" height="9" viewBox="0 0 9 9"><path d="M0 0H9L5.4 4.2V9L3.6 7.8V4.2Z" fill="#111"/></svg>
<svg class="a" style="left:713.6px;top:153.5px" width="14" height="14" viewBox="0 0 14 14"><rect x="2.5" y="0.9" width="10" height="10.3" rx="1.2" fill="none" stroke="#111" stroke-width="1"/><path d="M0.8 3.4V12.9H10" fill="none" stroke="#111" stroke-width="1.05"/><path d="M6.1 4.2L7.2 3.7V9" fill="none" stroke="#111" stroke-width="1"/></svg>
<div class="t" style="left:731px;top:154.15px;font-size:14px;font-weight:bold">InvoiceId</div>
<svg class="a" style="left:844.1px;top:155px" width="12" height="12" viewBox="0 0 12 12"><circle cx="2.6" cy="2.9" r="1.75" fill="none" stroke="#111" stroke-width="1.4"/><path d="M4.2 3.1H12" fill="none" stroke="#111" stroke-width="1.5"/><path d="M8.9 3.1V5.6" fill="none" stroke="#111" stroke-width="1.7"/><path d="M4.1 7.1Q1.7 9.4 4.1 11.7M8.1 7.1Q10.5 9.4 8.1 11.7M4.4 9.4H7.8" fill="none" stroke="#111" stroke-width="1.25"/></svg>
<div class="t" style="left:861px;top:154.15px;font-size:14px;font-weight:bold">CustomerId</div>
<div class="t" style="left:990px;top:154.15px;font-size:14px;font-weight:bold">InvoiceDate</div>
<div class="t" style="left:1174px;top:154.15px;font-size:14px">BillingAddress</div>
<div class="a" style="left:670px;top:194px;width:687px;height:585px;overflow:hidden;background:#d2d2d2">
<div class="a" style="left:0px;top:0px;width:40px;height:21px;background:#ededed"></div>
<div class="a" style="left:41px;top:0px;width:129px;height:21px;background:#fff"></div>
<div class="a" style="left:171px;top:0px;width:146px;height:21px;background:#fff"></div>
<div class="a" style="left:318px;top:0px;width:183px;height:21px;background:#fff"></div>
<div class="a" style="left:502px;top:0px;width:185px;height:21px;background:#fff"></div>
<div class="t" style="left:2.5px;top:3.15px">1</div>
<div class="t" style="left:43.5px;top:3.15px">1</div>
<div class="t" style="left:173px;top:3.15px">2&nbsp;&nbsp;<span style="color:#8a8a8a">Leonie</span></div>
<div class="a" style="left:301px;top:1px;width:16px;height:18px;background:#ebebeb"></div>
<svg class="a" style="left:304px;top:4px" width="11" height="12" viewBox="0 0 11 12"><rect x="0.55" y="0.5" width="9.1" height="11" rx="1.2" fill="none" stroke="#777" stroke-width="1.1"/><path d="M0.6 4.3H9.6M2.5 6.5H8M2.5 8.6H8" stroke="#777" stroke-width="1.05"/><circle cx="7.6" cy="2.5" r=".6" fill="#777"/></svg>
<div class="t" style="left:320px;top:3.15px">2009-01-01 01:00:00</div>
<div class="t" style="left:504px;top:3.15px">Theodor-Heuss-Straße 34</div>
<div class="a" style="left:0px;top:22px;width:40px;height:21px;background:#ededed"></div>
<div class="a" style="left:41px;top:22px;width:129px;height:21px;background:#fff"></div>
<div class="a" style="left:171px;top:22px;width:146px;height:21px;background:#fff"></div>
<div class="a" style="left:318px;top:22px;width:183px;height:21px;background:#fff"></div>
<div class="a" style="left:502px;top:22px;width:185px;height:21px;background:#fff"></div>
<div class="t" style="left:2.5px;top:25.15px">2</div>
<div class="t" style="left:43.5px;top:25.15px">2</div>
<div class="t" style="left:173px;top:25.15px">4&nbsp;&nbsp;<span style="color:#8a8a8a">Bjørn</span></div>
<div class="a" style="left:301px;top:23px;width:16px;height:18px;background:#ebebeb"></div>
<svg class="a" style="left:304px;top:26px" width="11" height="12" viewBox="0 0 11 12"><rect x="0.55" y="0.5" width="9.1" height="11" rx="1.2" fill="none" stroke="#777" stroke-width="1.1"/><path d="M0.6 4.3H9.6M2.5 6.5H8M2.5 8.6H8" stroke="#777" stroke-width="1.05"/><circle cx="7.6" cy="2.5" r=".6" fill="#777"/></svg>
<div class="t" style="left:320px;top:25.15px">2009-01-02 01:00:00</div>
<div class="t" style="left:504px;top:25.15px">Ullevålsveien 14</div>
<div class="a" style="left:0px;top:44px;width:40px;height:21px;background:#ededed"></div>
<div class="a" style="left:41px;top:44px;width:129px;height:21px;background:#ededed"></div>
<div class="a" style="left:171px;top:44px;width:146px;height:21px;background:#ededed"></div>
<div class="a" style="left:318px;top:44px;width:183px;height:21px;background:#ededed"></div>
<div class="a" style="left:502px;top:44px;width:185px;height:21px;background:#ededed"></div>
<div class="t" style="left:2.5px;top:47.15px">3</div>
<div class="t" style="left:43.5px;top:47.15px">3</div>
<div class="t" style="left:173px;top:47.15px">8&nbsp;&nbsp;<span style="color:#8a8a8a">Daan</span></div>
<div class="a" style="left:301px;top:45px;width:16px;height:18px;background:#ebebeb"></div>
<svg class="a" style="left:304px;top:48px" width="11" height="12" viewBox="0 0 11 12"><rect x="0.55" y="0.5" width="9.1" height="11" rx="1.2" fill="none" stroke="#777" stroke-width="1.1"/><path d="M0.6 4.3H9.6M2.5 6.5H8M2.5 8.6H8" stroke="#777" stroke-width="1.05"/><circle cx="7.6" cy="2.5" r=".6" fill="#777"/></svg>
<div class="t" style="left:320px;top:47.15px">2009-01-03 01:00:00</div>
<div class="t" style="left:504px;top:47.15px">Grétrystraat 63</div>
<div class="a" style="left:0px;top:66px;width:40px;height:21px;background:#ededed"></div>
<div class="a" style="left:41px;top:66px;width:129px;height:21px;background:#fff"></div>
<div class="a" style="left:171px;top:66px;width:146px;height:21px;background:#fff"></div>
<div class="a" style="left:318px;top:66px;width:183px;height:21px;background:#fff"></div>
<div class="a" style="left:502px;top:66px;width:185px;height:21px;background:#fff"></div>
<div class="t" style="left:2.5px;top:69.15px">4</div>
<div class="t" style="left:43.5px;top:69.15px">4</div>
<div class="t" style="left:173px;top:69.15px">14&nbsp;&nbsp;<span style="color:#8a8a8a">Mark</span></div>
<div class="a" style="left:301px;top:67px;width:16px;height:18px;background:#ebebeb"></div>
<svg class="a" style="left:304px;top:70px" width="11" height="12" viewBox="0 0 11 12"><rect x="0.55" y="0.5" width="9.1" height="11" rx="1.2" fill="none" stroke="#777" stroke-width="1.1"/><path d="M0.6 4.3H9.6M2.5 6.5H8M2.5 8.6H8" stroke="#777" stroke-width="1.05"/><circle cx="7.6" cy="2.5" r=".6" fill="#777"/></svg>
<div class="t" style="left:320px;top:69.15px">2009-01-06 01:00:00</div>
<div class="t" style="left:504px;top:69.15px">8210 111 ST NW</div>
<div class="a" style="left:0px;top:88px;width:40px;height:21px;background:#ededed"></div>
<div class="a" style="left:41px;top:88px;width:129px;height:21px;background:#fff"></div>
<div class="a" style="left:171px;top:88px;width:146px;height:21px;background:#fff"></div>
<div class="a" style="left:318px;top:88px;width:183px;height:21px;background:#fff"></div>
<div class="a" style="left:502px;top:88px;width:185px;height:21px;background:#fff"></div>
<div class="t" style="left:2.5px;top:91.15px">5</div>
<div class="t" style="left:43.5px;top:91.15px">5</div>
<div class="t" style="left:173px;top:91.15px">23&nbsp;&nbsp;<span style="color:#8a8a8a">John</span></div>
<div class="a" style="left:301px;top:89px;width:16px;height:18px;background:#ebebeb"></div>
<svg class="a" style="left:304px;top:92px" width="11" height="12" viewBox="0 0 11 12"><rect x="0.55" y="0.5" width="9.1" height="11" rx="1.2" fill="none" stroke="#777" stroke-width="1.1"/><path d="M0.6 4.3H9.6M2.5 6.5H8M2.5 8.6H8" stroke="#777" stroke-width="1.05"/><circle cx="7.6" cy="2.5" r=".6" fill="#777"/></svg>
<div class="t" style="left:320px;top:91.15px">2009-01-11 01:00:00</div>
<div class="t" style="left:504px;top:91.15px">69 Salem Street</div>
<div class="a" style="left:0px;top:110px;width:40px;height:21px;background:#ededed"></div>
<div class="a" style="left:41px;top:110px;width:129px;height:21px;background:#f0f5ff"></div>
<div class="a" style="left:171px;top:110px;width:146px;height:21px;background:#91d5ff"></div>
<div class="a" style="left:318px;top:110px;width:183px;height:21px;background:#91d5ff"></div>
<div class="a" style="left:502px;top:110px;width:185px;height:21px;background:#f0f5ff"></div>
<div class="t" style="left:2.5px;top:113.15px">6</div>
<div class="t" style="left:43.5px;top:113.15px">6</div>
<div class="t" style="left:173px;top:113.15px">37&nbsp;&nbsp;<span style="color:#8a8a8a">Fynn</span></div>
<div class="a" style="left:301px;top:111px;width:16px;height:18px;background:#ebebeb"></div>
<svg class="a" style="left:304px;top:114px" width="11" height="12" viewBox="0 0 11 12"><rect x="0.55" y="0.5" width="9.1" height="11" rx="1.2" fill="none" stroke="#777" stroke-width="1.1"/><path d="M0.6 4.3H9.6M2.5 6.5H8M2.5 8.6H8" stroke="#777" stroke-width="1.05"/><circle cx="7.6" cy="2.5" r=".6" fill="#777"/></svg>
<div class="t" style="left:320px;top:113.15px">2009-01-19 01:00:00</div>
<div class="t" style="left:504px;top:113.15px">Berger Straße 10</div>
<div class="a" style="left:0px;top:132px;width:40px;height:21px;background:#ededed"></div>
<div class="a" style="left:41px;top:132px;width:129px;height:21px;background:#fff"></div>
<div class="a" style="left:171px;top:132px;width:146px;height:21px;background:#91d5ff"></div>
<div class="a" style="left:318px;top:132px;width:183px;height:21px;background:#91d5ff"></div>
<div class="a" style="left:502px;top:132px;width:185px;height:21px;background:#fff"></div>
<div class="t" style="left:2.5px;top:135.15px">7</div>
<div class="t" style="left:43.5px;top:135.15px">7</div>
<div class="t" style="left:173px;top:135.15px">38&nbsp;&nbsp;<span style="color:#8a8a8a">Niklas</span></div>
<div class="a" style="left:301px;top:133px;width:16px;height:18px;background:#ebebeb"></div>
<svg class="a" style="left:304px;top:136px" width="11" height="12" viewBox="0 0 11 12"><rect x="0.55" y="0.5" width="9.1" height="11" rx="1.2" fill="none" stroke="#777" stroke-width="1.1"/><path d="M0.6 4.3H9.6M2.5 6.5H8M2.5 8.6H8" stroke="#777" stroke-width="1.05"/><circle cx="7.6" cy="2.5" r=".6" fill="#777"/></svg>
<div class="t" style="left:320px;top:135.15px">2009-02-01 01:00:00</div>
<div class="t" style="left:504px;top:135.15px">Barbarossastraße 19</div>
<div class="a" style="left:0px;top:154px;width:40px;height:21px;background:#ededed"></div>
<div class="a" style="left:41px;top:154px;width:129px;height:21px;background:#fff"></div>
<div class="a" style="left:171px;top:154px;width:146px;height:21px;background:#91d5ff"></div>
<div class="a" style="left:318px;top:154px;width:183px;height:21px;background:#91d5ff"></div>
<div class="a" style="left:502px;top:154px;width:185px;height:21px;background:#fff"></div>
<div class="t" style="left:2.5px;top:157.15px">8</div>
<div class="t" style="left:43.5px;top:157.15px">8</div>
<div class="t" style="left:173px;top:157.15px">40&nbsp;&nbsp;<span style="color:#8a8a8a">Dominique</span></div>
<div class="a" style="left:301px;top:155px;width:16px;height:18px;background:#ebebeb"></div>
<svg class="a" style="left:304px;top:158px" width="11" height="12" viewBox="0 0 11 12"><rect x="0.55" y="0.5" width="9.1" height="11" rx="1.2" fill="none" stroke="#777" stroke-width="1.1"/><path d="M0.6 4.3H9.6M2.5 6.5H8M2.5 8.6H8" stroke="#777" stroke-width="1.05"/><circle cx="7.6" cy="2.5" r=".6" fill="#777"/></svg>
<div class="t" style="left:320px;top:157.15px">2009-02-01 01:00:00</div>
<div class="t" style="left:504px;top:157.15px">8, Rue Hanovre</div>
<div class="a" style="left:0px;top:176px;width:40px;height:21px;background:#ededed"></div>
<div class="a" style="left:41px;top:176px;width:129px;height:21px;background:#ededed"></div>
<div class="a" style="left:171px;top:176px;width:146px;height:21px;background:#91d5ff"></div>
<div class="a" style="left:318px;top:176px;width:183px;height:21px;background:#91d5ff"></div>
<div class="a" style="left:502px;top:176px;width:185px;height:21px;background:#ededed"></div>
<div class="t" style="left:2.5px;top:179.15px">9</div>
<div class="t" style="left:43.5px;top:179.15px">9</div>
<div class="t" style="left:173px;top:179.15px">42&nbsp;&nbsp;<span style="color:#8a8a8a">Wyatt</span></div>
<div class="a" style="left:301px;top:177px;width:16px;height:18px;background:#ebebeb"></div>
<svg class="a" style="left:304px;top:180px" width="11" height="12" viewBox="0 0 11 12"><rect x="0.55" y="0.5" width="9.1" height="11" rx="1.2" fill="none" stroke="#777" stroke-width="1.1"/><path d="M0.6 4.3H9.6M2.5 6.5H8M2.5 8.6H8" stroke="#777" stroke-width="1.05"/><circle cx="7.6" cy="2.5" r=".6" fill="#777"/></svg>
<div class="t" style="left:320px;top:179.15px">2009-02-02 01:00:00</div>
<div class="t" style="left:504px;top:179.15px">9, Place Louis Barthou</div>
<div class="a" style="left:0px;top:198px;width:40px;height:21px;background:#ededed"></div>
<div class="a" style="left:41px;top:198px;width:129px;height:21px;background:#fff"></div>
<div class="a" style="left:171px;top:198px;width:146px;height:21px;background:#91d5ff"></div>
<div class="a" style="left:318px;top:198px;width:183px;height:21px;background:#91d5ff"></div>
<div class="a" style="left:502px;top:198px;width:185px;height:21px;background:#fff"></div>
<div class="t" style="left:2.5px;top:201.15px">10</div>
<div class="t" style="left:43.5px;top:201.15px">10</div>
<div class="t" style="left:173px;top:201.15px">46&nbsp;&nbsp;<span style="color:#8a8a8a">Hugh</span></div>
<div class="a" style="left:301px;top:199px;width:16px;height:18px;background:#ebebeb"></div>
<svg class="a" style="left:304px;top:202px" width="11" height="12" viewBox="0 0 11 12"><rect x="0.55" y="0.5" width="9.1" height="11" rx="1.2" fill="none" stroke="#777" stroke-width="1.1"/><path d="M0.6 4.3H9.6M2.5 6.5H8M2.5 8.6H8" stroke="#777" stroke-width="1.05"/><circle cx="7.6" cy="2.5" r=".6" fill="#777"/></svg>
<div class="t" style="left:320px;top:201.15px">2009-02-03 01:00:00</div>
<div class="t" style="left:504px;top:201.15px">3 Chatham Street</div>
<div class="a" style="left:0px;top:220px;width:40px;height:21px;background:#ededed"></div>
<div class="a" style="left:41px;top:220px;width:129px;height:21px;background:#fff"></div>
<div class="a" style="left:171px;top:220px;width:146px;height:21px;background:#91d5ff"></div>
<div class="a" style="left:318px;top:220px;width:183px;height:21px;background:#91d5ff"></div>
<div class="a" style="left:502px;top:220px;width:185px;height:21px;background:#fff"></div>
<div class="t" style="left:2.5px;top:223.15px">11</div>
<div class="t" style="left:43.5px;top:223.15px">11</div>
<div class="t" style="left:173px;top:223.15px">52&nbsp;&nbsp;<span style="color:#8a8a8a">Emma</span></div>
<div class="a" style="left:301px;top:221px;width:16px;height:18px;background:#ebebeb"></div>
<svg class="a" style="left:304px;top:224px" width="11" height="12" viewBox="0 0 11 12"><rect x="0.55" y="0.5" width="9.1" height="11" rx="1.2" fill="none" stroke="#777" stroke-width="1.1"/><path d="M0.6 4.3H9.6M2.5 6.5H8M2.5 8.6H8" stroke="#777" stroke-width="1.05"/><circle cx="7.6" cy="2.5" r=".6" fill="#777"/></svg>
<div class="t" style="left:320px;top:223.15px">2009-02-06 01:00:00</div>
<div class="t" style="left:504px;top:223.15px">202 Hoxton Street</div>
<div class="a" style="left:0px;top:242px;width:40px;height:21px;background:#ededed"></div>
<div class="a" style="left:41px;top:242px;width:129px;height:21px;background:#f0f5ff"></div>
<div class="a" style="left:171px;top:242px;width:146px;height:21px;background:#91d5ff"></div>
<div class="a" style="left:318px;top:242px;width:183px;height:21px;background:#91d5ff"></div>
<div class="a" style="left:502px;top:242px;width:185px;height:21px;background:#f0f5ff"></div>
<div class="t" style="left:2.5px;top:245.15px">12</div>
<div class="t" style="left:43.5px;top:245.15px">12</div>
<div class="t" style="left:173px;top:245.15px">2&nbsp;&nbsp;<span style="color:#8a8a8a">Leonie</span></div>
<div class="a" style="left:301px;top:243px;width:16px;height:18px;background:#ebebeb"></div>
<svg class="a" style="left:304px;top:246px" width="11" height="12" viewBox="0 0 11 12"><rect x="0.55" y="0.5" width="9.1" height="11" rx="1.2" fill="none" stroke="#777" stroke-width="1.1"/><path d="M0.6 4.3H9.6M2.5 6.5H8M2.5 8.6H8" stroke="#777" stroke-width="1.05"/><circle cx="7.6" cy="2.5" r=".6" fill="#777"/></svg>
<div class="t" style="left:320px;top:245.15px">2009-02-11 01:00:00</div>
<div class="t" style="left:504px;top:245.15px">Theodor-Heuss-Straße 34</div>
<div class="a" style="left:0px;top:264px;width:40px;height:21px;background:#ededed"></div>
<div class="a" style="left:41px;top:264px;width:129px;height:21px;background:#fff"></div>
<div class="a" style="left:171px;top:264px;width:146px;height:21px;background:#91d5ff"></div>
<div class="a" style="left:318px;top:264px;width:183px;height:21px;background:#91d5ff"></div>
<div class="a" style="left:502px;top:264px;width:185px;height:21px;background:#fff"></div>
<div class="t" style="left:2.5px;top:267.15px">13</div>
<div class="t" style="left:43.5px;top:267.15px">13</div>
<div class="t" style="left:173px;top:267.15px">16&nbsp;&nbsp;<span style="color:#8a8a8a">Frank</span></div>
<div class="a" style="left:301px;top:265px;width:16px;height:18px;background:#ebebeb"></div>
<svg class="a" style="left:304px;top:268px" width="11" height="12" viewBox="0 0 11 12"><rect x="0.55" y="0.5" width="9.1" height="11" rx="1.2" fill="none" stroke="#777" stroke-width="1.1"/><path d="M0.6 4.3H9.6M2.5 6.5H8M2.5 8.6H8" stroke="#777" stroke-width="1.05"/><circle cx="7.6" cy="2.5" r=".6" fill="#777"/></svg>
<div class="t" style="left:320px;top:267.15px">2009-02-19 01:00:00</div>
<div class="t" style="left:504px;top:267.15px">1600 Amphitheatre Parkway</div>
<div class="a" style="left:0px;top:286px;width:40px;height:21px;background:#ededed"></div>
<div class="a" style="left:41px;top:286px;width:129px;height:21px;background:#fff"></div>
<div class="a" style="left:171px;top:286px;width:146px;height:21px;background:#91d5ff"></div>
<div class="a" style="left:318px;top:286px;width:183px;height:21px;background:#91d5ff"></div>
<div class="a" style="left:502px;top:286px;width:185px;height:21px;background:#fff"></div>
<div class="t" style="left:2.5px;top:289.15px">14</div>
<div class="t" style="left:43.5px;top:289.15px">14</div>
<div class="t" style="left:173px;top:289.15px">17&nbsp;&nbsp;<span style="color:#8a8a8a">Jack</span></div>
<div class="a" style="left:301px;top:287px;width:16px;height:18px;background:#ebebeb"></div>
<svg class="a" style="left:304px;top:290px" width="11" height="12" viewBox="0 0 11 12"><rect x="0.55" y="0.5" width="9.1" height="11" rx="1.2" fill="none" stroke="#777" stroke-width="1.1"/><path d="M0.6 4.3H9.6M2.5 6.5H8M2.5 8.6H8" stroke="#777" stroke-width="1.05"/><circle cx="7.6" cy="2.5" r=".6" fill="#777"/></svg>
<div class="t" style="left:320px;top:289.15px">2009-03-04 01:00:00</div>
<div class="t" style="left:504px;top:289.15px">1 Microsoft Way</div>
<div class="a" style="left:0px;top:308px;width:40px;height:21px;background:#ededed"></div>
<div class="a" style="left:41px;top:308px;width:129px;height:21px;background:#ededed"></div>
<div class="a" style="left:171px;top:308px;width:146px;height:21px;background:#91d5ff"></div>
<div class="a" style="left:318px;top:308px;width:183px;height:21px;background:#91d5ff"></div>
<div class="a" style="left:502px;top:308px;width:185px;height:21px;background:#ededed"></div>
<div class="t" style="left:2.5px;top:311.15px">15</div>
<div class="t" style="left:43.5px;top:311.15px">15</div>
<div class="t" style="left:173px;top:311.15px">19&nbsp;&nbsp;<span style="color:#8a8a8a">Tim</span></div>
<div class="a" style="left:301px;top:309px;width:16px;height:18px;background:#ebebeb"></div>
<svg class="a" style="left:304px;top:312px" width="11" height="12" viewBox="0 0 11 12"><rect x="0.55" y="0.5" width="9.1" height="11" rx="1.2" fill="none" stroke="#777" stroke-width="1.1"/><path d="M0.6 4.3H9.6M2.5 6.5H8M2.5 8.6H8" stroke="#777" stroke-width="1.05"/><circle cx="7.6" cy="2.5" r=".6" fill="#777"/></svg>
<div class="t" style="left:320px;top:311.15px">2009-03-04 01:00:00</div>
<div class="t" style="left:504px;top:311.15px">1 Infinite Loop</div>
<div class="a" style="left:0px;top:330px;width:40px;height:21px;background:#ededed"></div>
<div class="a" style="left:41px;top:330px;width:129px;height:21px;background:#fff"></div>
<div class="a" style="left:171px;top:330px;width:146px;height:21px;background:#91d5ff"></div>
<div class="a" style="left:318px;top:330px;width:183px;height:21px;background:#91d5ff"></div>
<div class="a" style="left:502px;top:330px;width:185px;height:21px;background:#fff"></div>
<div class="t" style="left:2.5px;top:333.15px">16</div>
<div class="t" style="left:43.5px;top:333.15px">16</div>
<div class="t" style="left:173px;top:333.15px">21&nbsp;&nbsp;<span style="color:#8a8a8a">Kathy</span></div>
<div class="a" style="left:301px;top:331px;width:16px;height:18px;background:#ebebeb"></div>
<svg class="a" style="left:304px;top:334px" width="11" height="12" viewBox="0 0 11 12"><rect x="0.55" y="0.5" width="9.1" height="11" rx="1.2" fill="none" stroke="#777" stroke-width="1.1"/><path d="M0.6 4.3H9.6M2.5 6.5H8M2.5 8.6H8" stroke="#777" stroke-width="1.05"/><circle cx="7.6" cy="2.5" r=".6" fill="#777"/></svg>
<div class="t" style="left:320px;top:333.15px">2009-03-05 01:00:00</div>
<div class="t" style="left:504px;top:333.15px">801 W 4th Street</div>
<div class="a" style="left:0px;top:352px;width:40px;height:21px;background:#ededed"></div>
<div class="a" style="left:41px;top:352px;width:129px;height:21px;background:#fff"></div>
<div class="a" style="left:171px;top:352px;width:146px;height:21px;background:#fff"></div>
<div class="a" style="left:318px;top:352px;width:183px;height:21px;background:#fff"></div>
<div class="a" style="left:502px;top:352px;width:185px;height:21px;background:#fff"></div>
<div class="t" style="left:2.5px;top:355.15px">17</div>
<div class="t" style="left:43.5px;top:355.15px">17</div>
<div class="t" style="left:173px;top:355.15px">25&nbsp;&nbsp;<span style="color:#8a8a8a">Victor</span></div>
<div class="a" style="left:301px;top:353px;width:16px;height:18px;background:#ebebeb"></div>
<svg class="a" style="left:304px;top:356px" width="11" height="12" viewBox="0 0 11 12"><rect x="0.55" y="0.5" width="9.1" height="11" rx="1.2" fill="none" stroke="#777" stroke-width="1.1"/><path d="M0.6 4.3H9.6M2.5 6.5H8M2.5 8.6H8" stroke="#777" stroke-width="1.05"/><circle cx="7.6" cy="2.5" r=".6" fill="#777"/></svg>
<div class="t" style="left:320px;top:355.15px">2009-03-06 01:00:00</div>
<div class="t" style="left:504px;top:355.15px">319 N. Frances Street</div>
<div class="a" style="left:0px;top:374px;width:40px;height:21px;background:#ededed"></div>
<div class="a" style="left:41px;top:374px;width:129px;height:21px;background:#f0f5ff"></div>
<div class="a" style="left:171px;top:374px;width:146px;height:21px;background:#f0f5ff"></div>
<div class="a" style="left:318px;top:374px;width:183px;height:21px;background:#f0f5ff"></div>
<div class="a" style="left:502px;top:374px;width:185px;height:21px;background:#f0f5ff"></div>
<div class="t" style="left:2.5px;top:377.15px">18</div>
<div class="t" style="left:43.5px;top:377.15px">18</div>
<div class="t" style="left:173px;top:377.15px">31&nbsp;&nbsp;<span style="color:#8a8a8a">Martha</span></div>
<div class="a" style="left:301px;top:375px;width:16px;height:18px;background:#ebebeb"></div>
<svg class="a" style="left:304px;top:378px" width="11" height="12" viewBox="0 0 11 12"><rect x="0.55" y="0.5" width="9.1" height="11" rx="1.2" fill="none" stroke="#777" stroke-width="1.1"/><path d="M0.6 4.3H9.6M2.5 6.5H8M2.5 8.6H8" stroke="#777" stroke-width="1.05"/><circle cx="7.6" cy="2.5" r=".6" fill="#777"/></svg>
<div class="t" style="left:320px;top:377.15px">2009-03-09 01:00:00</div>
<div class="t" style="left:504px;top:377.15px">194A Chain Lake Drive</div>
<div class="a" style="left:0px;top:396px;width:40px;height:21px;background:#ededed"></div>
<div class="a" style="left:41px;top:396px;width:129px;height:21px;background:#fff"></div>
<div class="a" style="left:171px;top:396px;width:146px;height:21px;background:#fff"></div>
<div class="a" style="left:318px;top:396px;width:183px;height:21px;background:#fff"></div>
<div class="a" style="left:502px;top:396px;width:185px;height:21px;background:#fff"></div>
<div class="t" style="left:2.5px;top:399.15px">19</div>
<div class="t" style="left:43.5px;top:399.15px">19</div>
<div class="t" style="left:173px;top:399.15px">40&nbsp;&nbsp;<span style="color:#8a8a8a">Dominique</span></div>
<div class="a" style="left:301px;top:397px;width:16px;height:18px;background:#ebebeb"></div>
<svg class="a" style="left:304px;top:400px" width="11" height="12" viewBox="0 0 11 12"><rect x="0.55" y="0.5" width="9.1" height="11" rx="1.2" fill="none" stroke="#777" stroke-width="1.1"/><path d="M0.6 4.3H9.6M2.5 6.5H8M2.5 8.6H8" stroke="#777" stroke-width="1.05"/><circle cx="7.6" cy="2.5" r=".6" fill="#777"/></svg>
<div class="t" style="left:320px;top:399.15px">2009-03-14 01:00:00</div>
<div class="t" style="left:504px;top:399.15px">8, Rue Hanovre</div>
<div class="a" style="left:0px;top:418px;width:40px;height:21px;background:#ededed"></div>
<div class="a" style="left:41px;top:418px;width:129px;height:21px;background:#fff"></div>
<div class="a" style="left:171px;top:418px;width:146px;height:21px;background:#fff"></div>
<div class="a" style="left:318px;top:418px;width:183px;height:21px;background:#fff"></div>
<div class="a" style="left:502px;top:418px;width:185px;height:21px;background:#fff"></div>
<div class="t" style="left:2.5px;top:421.15px">20</div>
<div class="t" style="left:43.5px;top:421.15px">20</div>
<div class="t" style="left:173px;top:421.15px">54&nbsp;&nbsp;<span style="color:#8a8a8a">Steve</span></div>
<div class="a" style="left:301px;top:419px;width:16px;height:18px;background:#ebebeb"></div>
<svg class="a" style="left:304px;top:422px" width="11" height="12" viewBox="0 0 11 12"><rect x="0.55" y="0.5" width="9.1" height="11" rx="1.2" fill="none" stroke="#777" stroke-width="1.1"/><path d="M0.6 4.3H9.6M2.5 6.5H8M2.5 8.6H8" stroke="#777" stroke-width="1.05"/><circle cx="7.6" cy="2.5" r=".6" fill="#777"/></svg>
<div class="t" style="left:320px;top:421.15px">2009-03-22 01:00:00</div>
<div class="t" style="left:504px;top:421.15px">110 Raeburn Pl</div>
<div class="a" style="left:0px;top:440px;width:40px;height:21px;background:#ededed"></div>
<div class="a" style="left:41px;top:440px;width:129px;height:21px;background:#ededed"></div>
<div class="a" style="left:171px;top:440px;width:146px;height:21px;background:#ededed"></div>
<div class="a" style="left:318px;top:440px;width:183px;height:21px;background:#ededed"></div>
<div class="a" style="left:502px;top:440px;width:185px;height:21px;background:#ededed"></div>
<div class="t" style="left:2.5px;top:443.15px">21</div>
<div class="t" style="left:43.5px;top:443.15px">21</div>
<div class="t" style="left:173px;top:443.15px">55&nbsp;&nbsp;<span style="color:#8a8a8a">Mark</span></div>
<div class="a" style="left:301px;top:441px;width:16px;height:18px;background:#ebebeb"></div>
<svg class="a" style="left:304px;top:444px" width="11" height="12" viewBox="0 0 11 12"><rect x="0.55" y="0.5" width="9.1" height="11" rx="1.2" fill="none" stroke="#777" stroke-width="1.1"/><path d="M0.6 4.3H9.6M2.5 6.5H8M2.5 8.6H8" stroke="#777" stroke-width="1.05"/><circle cx="7.6" cy="2.5" r=".6" fill="#777"/></svg>
<div class="t" style="left:320px;top:443.15px">2009-04-04 02:00:00</div>
<div class="t" style="left:504px;top:443.15px">421 Bourke Street</div>
<div class="a" style="left:0px;top:462px;width:40px;height:21px;background:#ededed"></div>
<div class="a" style="left:41px;top:462px;width:129px;height:21px;background:#fff"></div>
<div class="a" style="left:171px;top:462px;width:146px;height:21px;background:#fff"></div>
<div class="a" style="left:318px;top:462px;width:183px;height:21px;background:#fff"></div>
<div class="a" style="left:502px;top:462px;width:185px;height:21px;background:#fff"></div>
<div class="t" style="left:2.5px;top:465.15px">22</div>
<div class="t" style="left:43.5px;top:465.15px">22</div>
<div class="t" style="left:173px;top:465.15px">57&nbsp;&nbsp;<span style="color:#8a8a8a">Luis</span></div>
<div class="a" style="left:301px;top:463px;width:16px;height:18px;background:#ebebeb"></div>
<svg class="a" style="left:304px;top:466px" width="11" height="12" viewBox="0 0 11 12"><rect x="0.55" y="0.5" width="9.1" height="11" rx="1.2" fill="none" stroke="#777" stroke-width="1.1"/><path d="M0.6 4.3H9.6M2.5 6.5H8M2.5 8.6H8" stroke="#777" stroke-width="1.05"/><circle cx="7.6" cy="2.5" r=".6" fill="#777"/></svg>
<div class="t" style="left:320px;top:465.15px">2009-04-04 02:00:00</div>
<div class="t" style="left:504px;top:465.15px">Calle Lira, 198</div>
<div class="a" style="left:0px;top:484px;width:40px;height:21px;background:#ededed"></div>
<div class="a" style="left:41px;top:484px;width:129px;height:21px;background:#fff"></div>
<div class="a" style="left:171px;top:484px;width:146px;height:21px;background:#fff"></div>
<div class="a" style="left:318px;top:484px;width:183px;height:21px;background:#fff"></div>
<div class="a" style="left:502px;top:484px;width:185px;height:21px;background:#fff"></div>
<div class="t" style="left:2.5px;top:487.15px">23</div>
<div class="t" style="left:43.5px;top:487.15px">23</div>
<div class="t" style="left:173px;top:487.15px">59&nbsp;&nbsp;<span style="color:#8a8a8a">Puja</span></div>
<div class="a" style="left:301px;top:485px;width:16px;height:18px;background:#ebebeb"></div>
<svg class="a" style="left:304px;top:488px" width="11" height="12" viewBox="0 0 11 12"><rect x="0.55" y="0.5" width="9.1" height="11" rx="1.2" fill="none" stroke="#777" stroke-width="1.1"/><path d="M0.6 4.3H9.6M2.5 6.5H8M2.5 8.6H8" stroke="#777" stroke-width="1.05"/><circle cx="7.6" cy="2.5" r=".6" fill="#777"/></svg>
<div class="t" style="left:320px;top:487.15px">2009-04-05 02:00:00</div>
<div class="t" style="left:504px;top:487.15px">3,Raj Bhavan Road</div>
<div class="a" style="left:0px;top:506px;width:40px;height:21px;background:#ededed"></div>
<div class="a" style="left:41px;top:506px;width:129px;height:21px;background:#f0f5ff"></div>
<div class="a" style="left:171px;top:506px;width:146px;height:21px;background:#f0f5ff"></div>
<div class="a" style="left:318px;top:506px;width:183px;height:21px;background:#f0f5ff"></div>
<div class="a" style="left:502px;top:506px;width:185px;height:21px;background:#f0f5ff"></div>
<div class="t" style="left:2.5px;top:509.15px">24</div>
<div class="t" style="left:43.5px;top:509.15px">24</div>
<div class="t" style="left:173px;top:509.15px">4&nbsp;&nbsp;<span style="color:#8a8a8a">Bjørn</span></div>
<div class="a" style="left:301px;top:507px;width:16px;height:18px;background:#ebebeb"></div>
<svg class="a" style="left:304px;top:510px" width="11" height="12" viewBox="0 0 11 12"><rect x="0.55" y="0.5" width="9.1" height="11" rx="1.2" fill="none" stroke="#777" stroke-width="1.1"/><path d="M0.6 4.3H9.6M2.5 6.5H8M2.5 8.6H8" stroke="#777" stroke-width="1.05"/><circle cx="7.6" cy="2.5" r=".6" fill="#777"/></svg>
<div class="t" style="left:320px;top:509.15px">2009-04-06 02:00:00</div>
<div class="t" style="left:504px;top:509.15px">Ullevålsveien 14</div>
<div class="a" style="left:0px;top:528px;width:40px;height:21px;background:#ededed"></div>
<div class="a" style="left:41px;top:528px;width:129px;height:21px;background:#fff"></div>
<div class="a" style="left:171px;top:528px;width:146px;height:21px;background:#fff"></div>
<div class="a" style="left:318px;top:528px;width:183px;height:21px;background:#fff"></div>
<div class="a" style="left:502px;top:528px;width:185px;height:21px;background:#fff"></div>
<div class="t" style="left:2.5px;top:531.15px">25</div>
<div class="t" style="left:43.5px;top:531.15px">25</div>
<div class="t" style="left:173px;top:531.15px">10&nbsp;&nbsp;<span style="color:#8a8a8a">Eduardo</span></div>
<div class="a" style="left:301px;top:529px;width:16px;height:18px;background:#ebebeb"></div>
<svg class="a" style="left:304px;top:532px" width="11" height="12" viewBox="0 0 11 12"><rect x="0.55" y="0.5" width="9.1" height="11" rx="1.2" fill="none" stroke="#777" stroke-width="1.1"/><path d="M0.6 4.3H9.6M2.5 6.5H8M2.5 8.6H8" stroke="#777" stroke-width="1.05"/><circle cx="7.6" cy="2.5" r=".6" fill="#777"/></svg>
<div class="t" style="left:320px;top:531.15px">2009-04-09 02:00:00</div>
<div class="t" style="left:504px;top:531.15px">Rua Dr. Falcão Filho, 155</div>
<div class="a" style="left:0px;top:550px;width:40px;height:21px;background:#ededed"></div>
<div class="a" style="left:41px;top:550px;width:129px;height:21px;background:#fff"></div>
<div class="a" style="left:171px;top:550px;width:146px;height:21px;background:#fff"></div>
<div class="a" style="left:318px;top:550px;width:183px;height:21px;background:#fff"></div>
<div class="a" style="left:502px;top:550px;width:185px;height:21px;background:#fff"></div>
<div class="t" style="left:2.5px;top:553.15px">26</div>
<div class="t" style="left:43.5px;top:553.15px">26</div>
<div class="t" style="left:173px;top:553.15px">19&nbsp;&nbsp;<span style="color:#8a8a8a">Tim</span></div>
<div class="a" style="left:301px;top:551px;width:16px;height:18px;background:#ebebeb"></div>
<svg class="a" style="left:304px;top:554px" width="11" height="12" viewBox="0 0 11 12"><rect x="0.55" y="0.5" width="9.1" height="11" rx="1.2" fill="none" stroke="#777" stroke-width="1.1"/><path d="M0.6 4.3H9.6M2.5 6.5H8M2.5 8.6H8" stroke="#777" stroke-width="1.05"/><circle cx="7.6" cy="2.5" r=".6" fill="#777"/></svg>
<div class="t" style="left:320px;top:553.15px">2009-04-14 02:00:00</div>
<div class="t" style="left:504px;top:553.15px">1 Infinite Loop</div>
<div class="a" style="left:0px;top:572px;width:40px;height:21px;background:#ededed"></div>
<div class="a" style="left:41px;top:572px;width:129px;height:21px;background:#ededed"></div>
<div class="a" style="left:171px;top:572px;width:146px;height:21px;background:#ededed"></div>
<div class="a" style="left:318px;top:572px;width:183px;height:21px;background:#ededed"></div>
<div class="a" style="left:502px;top:572px;width:185px;height:21px;background:#ededed"></div>
<div class="t" style="left:2.5px;top:575.15px">27</div>
<div class="t" style="left:43.5px;top:575.15px">27</div>
<div class="t" style="left:173px;top:575.15px">33&nbsp;&nbsp;<span style="color:#8a8a8a">Ellie</span></div>
<div class="a" style="left:301px;top:573px;width:16px;height:18px;background:#ebebeb"></div>
<svg class="a" style="left:304px;top:576px" width="11" height="12" viewBox="0 0 11 12"><rect x="0.55" y="0.5" width="9.1" height="11" rx="1.2" fill="none" stroke="#777" stroke-width="1.1"/><path d="M0.6 4.3H9.6M2.5 6.5H8M2.5 8.6H8" stroke="#777" stroke-width="1.05"/><circle cx="7.6" cy="2.5" r=".6" fill="#777"/></svg>
<div class="t" style="left:320px;top:575.15px">2009-04-22 02:00:00</div>
<div class="t" style="left:504px;top:575.15px">5112 48 Street</div>
</div>
<div class="a" style="left:1142.5px;top:754px;width:186px;height:16px;background:#d3d3d3;"></div>
<div class="t" style="left:1143.5px;top:754.49px;font-size:13.6px;color:#000">Rows: 11, Count: 22, Sum:330</div>
<div class="a" style="left:1357px;top:150px;width:11px;height:629px;background:#ececec;"></div>
<div class="a" style="left:1357px;top:150px;width:11px;height:173px;background:#bbbbbb;"></div>
<div class="a" style="left:670px;top:779px;width:687px;height:11px;background:#ececec;"></div>
<div class="a" style="left:670px;top:779px;width:320px;height:11px;background:#c0c0c0;"></div>
<div class="a" style="left:1357px;top:779px;width:11px;height:11px;background:#d4d4d4;"></div>
<div class="a" style="left:1357px;top:774px;width:11px;height:5px;background:#bdbdbd;border-radius:2px"></div>
<div class="a" style="left:3px;top:790px;width:1365px;height:20px;background:#2000f8;"></div>
<svg class="a" style="left:15px;top:795px" width="10" height="10" viewBox="0 0 10 11"><ellipse cx="5" cy="2.2" rx="5" ry="2.2" fill="#fff"/><path d="M0 4.2 Q5 7.6 10 4.2 V6 Q5 9.4 0 6Z" fill="#fff"/><path d="M0 7.6 Q5 11 10 7.6 V8.8 Q5 12.2 0 8.8Z" fill="#fff"/></svg>
<div class="t" style="left:31px;top:792.65px;font-size:14px;color:#fff">Chinook</div>
<svg class="a" style="left:104px;top:793px" width="11" height="13" viewBox="0 0 11 13"><rect x="0" y="0.0" width="11" height="3.8" rx=".6" fill="#fff"/><rect x="1.5" y="1.4" width="2.5" height="1" fill="#2000f8"/><rect x="0" y="4.5" width="11" height="3.8" rx=".6" fill="#fff"/><rect x="1.5" y="5.9" width="2.5" height="1" fill="#2000f8"/><rect x="0" y="9.0" width="11" height="3.8" rx=".6" fill="#fff"/><rect x="1.5" y="10.4" width="2.5" height="1" fill="#2000f8"/></svg>
<div class="t" style="left:120px;top:792.65px;font-size:14px;color:#fff">MS SQL local</div>
<svg class="a" style="left:223px;top:794px" width="10" height="11" viewBox="0 0 10 11"><circle cx="5" cy="3" r="2.8" fill="#fff"/><path d="M0 11Q0 6.6 5 6.6Q10 6.6 10 11Z" fill="#fff"/></svg>
<div class="t" style="left:239px;top:792.65px;font-size:14px;color:#fff">sa</div>
<svg class="a" style="left:273px;top:794px" width="12" height="12" viewBox="0 0 12 12"><circle cx="5.9" cy="5.9" r="5.85" fill="#8fdc66"/><path d="M2.2 5.7L4.8 8.4L9.2 3.6" fill="none" stroke="#2200f0" stroke-width="1.3"/></svg>
<div class="t" style="left:289.3px;top:792.65px;font-size:14px;color:#fff">Connected</div></body></html>
